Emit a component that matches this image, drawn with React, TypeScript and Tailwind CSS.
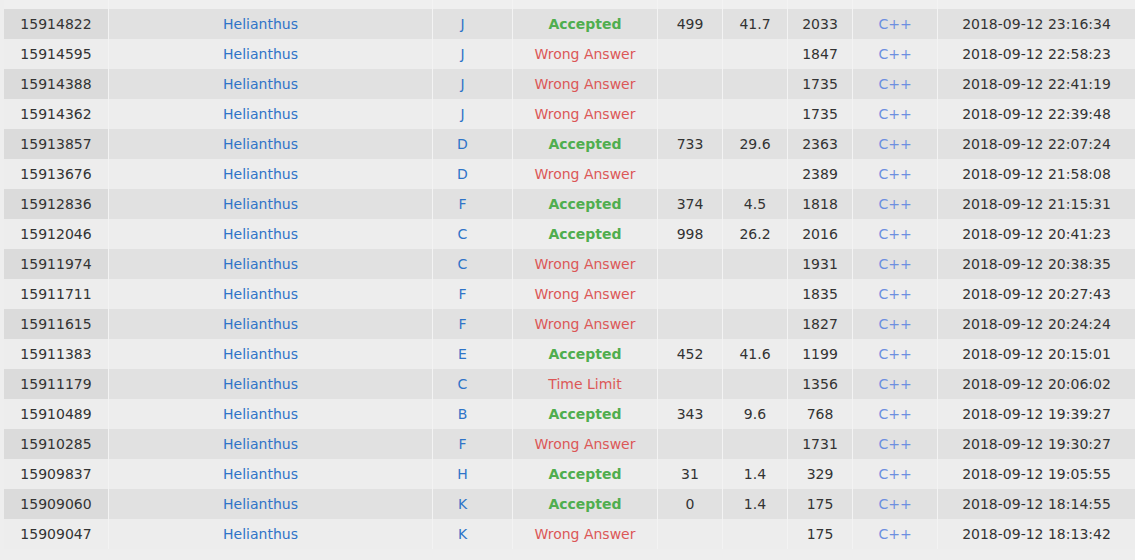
import React from "react";

type Row = [string, string, string, string, string, string, string];

const rows: Row[] = [
  ["15914822", "J", "Accepted", "499", "41.7", "2033", "2018-09-12 23:16:34"],
  ["15914595", "J", "Wrong Answer", "", "", "1847", "2018-09-12 22:58:23"],
  ["15914388", "J", "Wrong Answer", "", "", "1735", "2018-09-12 22:41:19"],
  ["15914362", "J", "Wrong Answer", "", "", "1735", "2018-09-12 22:39:48"],
  ["15913857", "D", "Accepted", "733", "29.6", "2363", "2018-09-12 22:07:24"],
  ["15913676", "D", "Wrong Answer", "", "", "2389", "2018-09-12 21:58:08"],
  ["15912836", "F", "Accepted", "374", "4.5", "1818", "2018-09-12 21:15:31"],
  ["15912046", "C", "Accepted", "998", "26.2", "2016", "2018-09-12 20:41:23"],
  ["15911974", "C", "Wrong Answer", "", "", "1931", "2018-09-12 20:38:35"],
  ["15911711", "F", "Wrong Answer", "", "", "1835", "2018-09-12 20:27:43"],
  ["15911615", "F", "Wrong Answer", "", "", "1827", "2018-09-12 20:24:24"],
  ["15911383", "E", "Accepted", "452", "41.6", "1199", "2018-09-12 20:15:01"],
  ["15911179", "C", "Time Limit", "", "", "1356", "2018-09-12 20:06:02"],
  ["15910489", "B", "Accepted", "343", "9.6", "768", "2018-09-12 19:39:27"],
  ["15910285", "F", "Wrong Answer", "", "", "1731", "2018-09-12 19:30:27"],
  ["15909837", "H", "Accepted", "31", "1.4", "329", "2018-09-12 19:05:55"],
  ["15909060", "K", "Accepted", "0", "1.4", "175", "2018-09-12 18:14:55"],
  ["15909047", "K", "Wrong Answer", "", "", "175", "2018-09-12 18:13:42"],
];

const cell = "flex items-center justify-center border-l border-[#f3f3f3] whitespace-nowrap";

function StatusText({ s }: { s: string }) {
  if (s === "Accepted") return <span className="font-bold text-[#4fae4f]">{s}</span>;
  return <span className="text-[#dc5757]">{s}</span>;
}

export default function App() {
  return (
    <div
      className="w-[1135px] h-[560px] overflow-hidden bg-[#eeeeee] text-[14px] text-[#333333]"
      style={{ fontFamily: '"DejaVu Sans", Verdana, sans-serif' }}
    >
      <div className="ml-[4px] w-[1131px]">
        <div className="flex h-[9px] bg-[#efefef]">
          <div className="w-[104px]" />
          <div className={`${cell} w-[324px]`} />
          <div className={`${cell} w-[80px]`} />
          <div className={`${cell} w-[145px]`} />
          <div className={`${cell} w-[65px]`} />
          <div className={`${cell} w-[65px]`} />
          <div className={`${cell} w-[65px]`} />
          <div className={`${cell} w-[85px]`} />
          <div className={`${cell} w-[198px]`} />
        </div>
        {rows.map((r, i) => {
          const dark = i % 2 === 0;
          return (
            <div key={r[0]} className={`flex h-[30px] ${dark ? "bg-[#e1e1e1]" : "bg-[#ededed]"}`}>
              <div className={`flex w-[104px] items-center justify-center whitespace-nowrap ${dark ? "bg-[#dbdbdb]" : ""}`}>{r[0]}</div>
              <div className={`${cell} w-[324px] pr-[20px] text-[#2f74c8]`}>Helianthus</div>
              <div className={`${cell} w-[80px] pr-[20px] text-[#2f74c8]`}>{r[1]}</div>
              <div className={`${cell} w-[145px]`}>
                <StatusText s={r[2]} />
              </div>
              <div className={`${cell} w-[65px]`}>{r[3]}</div>
              <div className={`${cell} w-[65px]`}>{r[4]}</div>
              <div className={`${cell} w-[65px]`}>{r[5]}</div>
              <div className={`${cell} w-[85px] text-[#6d8fe0]`}>C++</div>
              <div className={`${cell} w-[198px]`}>{r[6]}</div>
            </div>
          );
        })}
      </div>
    </div>
  );
}
